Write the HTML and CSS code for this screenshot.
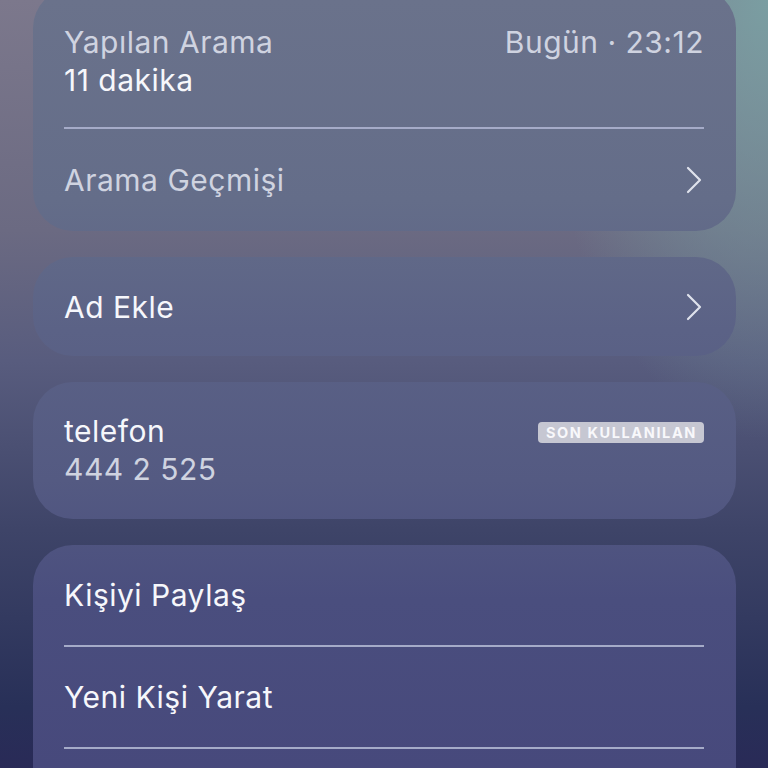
FILE: index.html
```html
<!doctype html>
<html lang="tr">
<head>
  <meta charset="UTF-8" />
  <meta name="viewport" content="width=device-width, initial-scale=1.0" />
  <title>Kişi</title>
  <link rel="stylesheet" href="styles.css">
</head>
<body>

  <div class="screen">

    <div class="card">
      <div class="call-info">
        <div class="line">
          <span class="muted">Yapılan Arama</span>
          <span class="muted">Bugün · 23:12</span>
        </div>
        <div class="line">11 dakika</div>
      </div>
      <div class="divider"></div>
      <div class="row">
        <span class="muted">Arama Geçmişi</span>
        <svg class="chevron" viewBox="0 0 16 28"><path d="M2 2 L14 14 L2 26" /></svg>
      </div>
    </div>

    <div class="card">
      <div class="row short">
        <span>Ad Ekle</span>
        <svg class="chevron" viewBox="0 0 16 28"><path d="M2 2 L14 14 L2 26" /></svg>
      </div>
    </div>

    <div class="card">
      <div class="phone">
        <div class="line">
          <span>telefon</span>
          <span class="badge">SON KULLANILAN</span>
        </div>
        <div class="line muted">444 2 525</div>
      </div>
    </div>

    <div class="card last">
      <div class="row action">Kişiyi Paylaş</div>
      <div class="divider"></div>
      <div class="row action">Yeni Kişi Yarat</div>
      <div class="divider"></div>
    </div>

  </div>

</body>
</html>
```

FILE: styles.css
```css
body {
  margin: 0;
  height: 768px;
  overflow: hidden;
  font-family: Inter, Roboto, sans-serif;
  color: #f6f7fb;
  background:
    radial-gradient(ellipse 230px 440px at 100% 0%, rgba(122, 162, 164, 0.9), rgba(110, 150, 160, 0) 100%),
    linear-gradient(180deg, #7c788c 0%, #6b6a82 30%, #585c7e 47%, #3e4468 69%, #283058 92%, #292a57 100%);
}

.screen {
  display: flex;
  flex-direction: column;
  gap: 26px;
  padding: 0 32px 0 33px;
  margin-top: -12px;
}

.card {
  background: linear-gradient(180deg, #6a728b 0px, #646d89 200px, #5b6286 330px, #545a82 480px, #4a4e7e 600px, #47497c 768px) fixed;
  border-radius: 40px;
  padding: 0 32px 0 31px;
  font-size: 30px;
  letter-spacing: 0.5px;
}

.card.last {
  border-radius: 40px 40px 0 0;
  height: 300px;
}

.call-info {
  padding: 35px 0 28px;
}

.phone {
  padding: 30px 0 31px;
}

.line {
  display: flex;
  justify-content: space-between;
  align-items: center;
  height: 38px;
}

.muted {
  color: #cfd3e0;
}

.divider {
  height: 2px;
  background: #a5abc8;
}

.row {
  display: flex;
  justify-content: space-between;
  align-items: center;
  height: 102px;
}

.row.short {
  height: 99px;
}

.row.action {
  height: 100px;
}

.chevron {
  width: 16px;
  height: 28px;
  margin-right: 2px;
}

.chevron path {
  fill: none;
  stroke: #dfe2ec;
  stroke-width: 2.2;
  stroke-linecap: round;
  stroke-linejoin: round;
}

.badge {
  background: #c6c7d2;
  color: #f8f8fb;
  font-size: 14.5px;
  font-weight: 700;
  letter-spacing: 1.6px;
  border-radius: 4px;
  padding: 2px 7px 2px 8px;
  line-height: 17px;
  align-self: flex-start;
  margin-top: 10px;
}
```
